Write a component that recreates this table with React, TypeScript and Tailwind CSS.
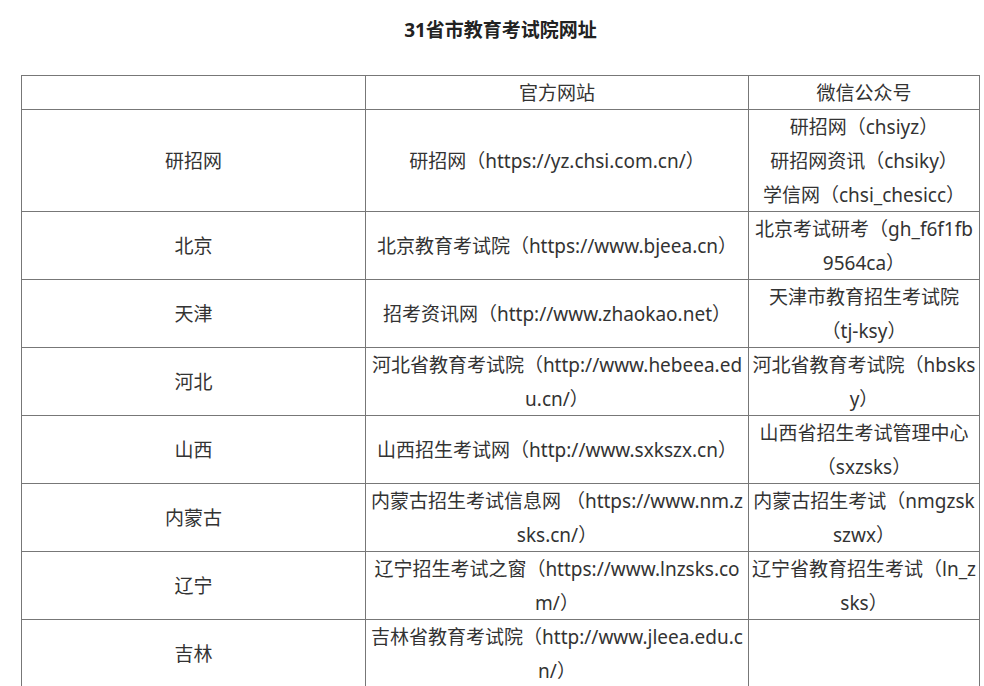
import React from "react";

type Row = { name: string; site: string[]; wechat: string[]; h: string };

const ROWS: Row[] = [
  {
    name: "研招网",
    site: ["研招网（https://yz.chsi.com.cn/）"],
    wechat: ["研招网（chsiyz）", "研招网资讯（chsiky）", "学信网（chsi_chesicc）"],
    h: "h-[102px]",
  },
  {
    name: "北京",
    site: ["北京教育考试院（https://www.bjeea.cn）"],
    wechat: ["北京考试研考（gh_f6f1fb", "9564ca）"],
    h: "h-[68px]",
  },
  {
    name: "天津",
    site: ["招考资讯网（http://www.zhaokao.net）"],
    wechat: ["天津市教育招生考试院", "（tj-ksy）"],
    h: "h-[68px]",
  },
  {
    name: "河北",
    site: ["河北省教育考试院（http://www.hebeea.ed", "u.cn/）"],
    wechat: ["河北省教育考试院（hbsks", "y）"],
    h: "h-[68px]",
  },
  {
    name: "山西",
    site: ["山西招生考试网（http://www.sxkszx.cn）"],
    wechat: ["山西省招生考试管理中心", "（sxzsks）"],
    h: "h-[68px]",
  },
  {
    name: "内蒙古",
    site: ["内蒙古招生考试信息网 （https://www.nm.z", "sks.cn/）"],
    wechat: ["内蒙古招生考试（nmgzsk", "szwx）"],
    h: "h-[68px]",
  },
  {
    name: "辽宁",
    site: ["辽宁招生考试之窗（https://www.lnzsks.co", "m/）"],
    wechat: ["辽宁省教育招生考试（ln_z", "sks）"],
    h: "h-[68px]",
  },
  {
    name: "吉林",
    site: ["吉林省教育考试院（http://www.jleea.edu.c", "n/）"],
    wechat: [],
    h: "h-[68px]",
  },
];

function Cell({ lines, h }: { lines: string[]; h: string }) {
  return (
    <div
      className={`${h} flex flex-col items-center justify-center overflow-hidden border-r border-b border-[#777] text-center`}
    >
      {lines.map((l, i) => (
        <div key={i} className="whitespace-pre leading-[34px]">
          {l}
        </div>
      ))}
    </div>
  );
}

export default function App() {
  return (
    <div
      className="min-h-screen bg-white pl-[21px] pt-[13px] text-[19px] text-[#333]"
      style={{ fontFamily: '"Noto Sans", "Noto Sans CJK SC", sans-serif' }}
    >
      <h1 className="mb-[28px] w-[959px] text-center text-[19px] font-bold leading-[34px] text-[#222]">
        31省市教育考试院网址
      </h1>
      <div className="grid w-[959px] grid-cols-[344px_383px_231px] border-t border-l border-[#777]">
        <Cell lines={[""]} h="h-[34px]" />
        <Cell lines={["官方网站"]} h="h-[34px]" />
        <Cell lines={["微信公众号"]} h="h-[34px]" />
        {ROWS.map((r) => (
          <React.Fragment key={r.name}>
            <Cell lines={[r.name]} h={r.h} />
            <Cell lines={r.site} h={r.h} />
            <Cell lines={r.wechat} h={r.h} />
          </React.Fragment>
        ))}
      </div>
    </div>
  );
}
